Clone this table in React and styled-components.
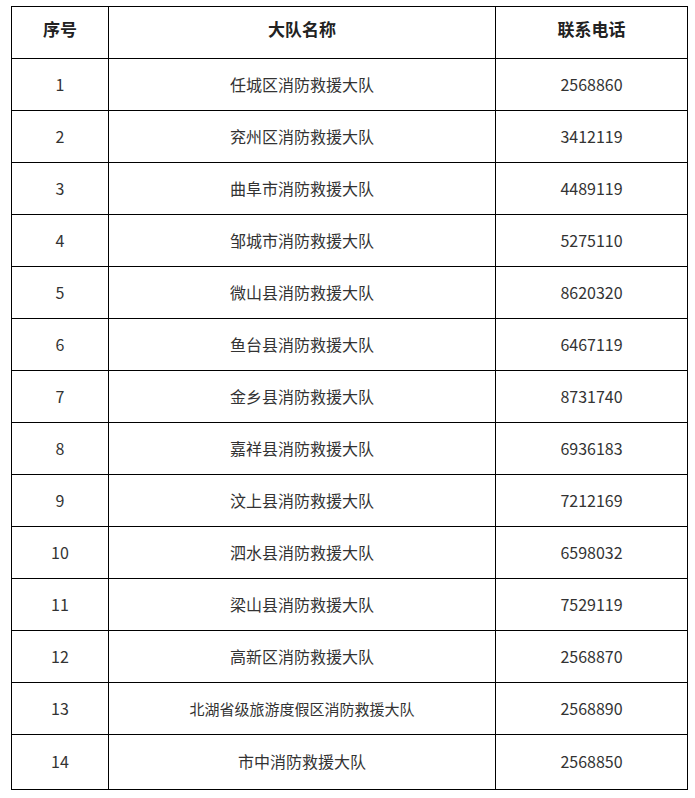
import React from "react";
import styled, { createGlobalStyle } from "styled-components";

const Global = createGlobalStyle`
  html, body { margin: 0; padding: 0; background: #fff; }
  body { font-family: "Microsoft YaHei", "Noto Sans CJK SC", "Noto Sans", sans-serif; }
`;

const Page = styled.div`
  padding: 6px 8px 0 11px;
`;

const Table = styled.table`
  border-collapse: collapse;
  width: 677px;
  table-layout: fixed;
  color: #333;
  font-size: 16px;
`;

const Col = styled.col`
  width: ${(p) => p.$w}px;
`;

const Th = styled.th`
  border: 1px solid #000;
  height: 42px;
  padding: 0 0 9px;
  font-weight: 700;
  color: #222;
  font-size: 17px;
  text-align: center;
  vertical-align: middle;
`;

const Td = styled.td`
  border: 1px solid #000;
  height: ${(p) => (p.$last ? 54 : 51)}px;
  padding: 0;
  text-align: center;
  vertical-align: middle;
  line-height: 1.2;
  font-size: ${(p) => (p.$small ? 15 : 16)}px;
`;

const rows = [
  ["1", "任城区消防救援大队", "2568860"],
  ["2", "兖州区消防救援大队", "3412119"],
  ["3", "曲阜市消防救援大队", "4489119"],
  ["4", "邹城市消防救援大队", "5275110"],
  ["5", "微山县消防救援大队", "8620320"],
  ["6", "鱼台县消防救援大队", "6467119"],
  ["7", "金乡县消防救援大队", "8731740"],
  ["8", "嘉祥县消防救援大队", "6936183"],
  ["9", "汶上县消防救援大队", "7212169"],
  ["10", "泗水县消防救援大队", "6598032"],
  ["11", "梁山县消防救援大队", "7529119"],
  ["12", "高新区消防救援大队", "2568870"],
  ["13", "北湖省级旅游度假区消防救援大队", "2568890"],
  ["14", "市中消防救援大队", "2568850"],
];

export default function App() {
  return (
    <>
      <Global />
      <Page>
        <Table>
          <colgroup>
            <Col $w={97} />
            <Col $w={387} />
            <Col $w={192} />
          </colgroup>
          <thead>
            <tr>
              <Th>序号</Th>
              <Th>大队名称</Th>
              <Th>联系电话</Th>
            </tr>
          </thead>
          <tbody>
            {rows.map((r, i) => (
              <tr key={r[0]}>
                {r.map((c, j) => (
                  <Td
                    key={j}
                    $last={i === rows.length - 1}
                    $small={j === 1 && c.length > 12}
                  >
                    {c}
                  </Td>
                ))}
              </tr>
            ))}
          </tbody>
        </Table>
      </Page>
    </>
  );
}
